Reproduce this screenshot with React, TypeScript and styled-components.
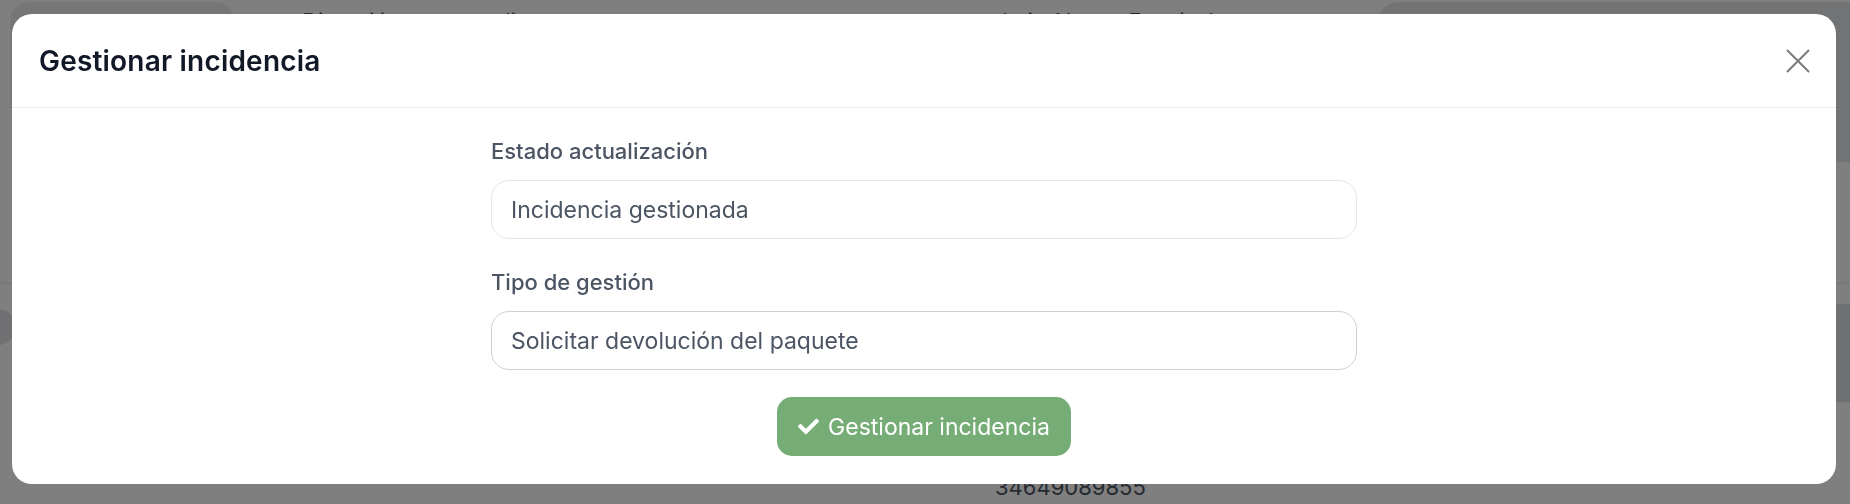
import React from "react";
import styled, { createGlobalStyle } from "styled-components";
import { FaCheck } from "react-icons/fa";

const GlobalStyle = createGlobalStyle`
  html, body {
    margin: 0;
    padding: 0;
    background: #ffffff;
    overflow: hidden;
  }
  body {
    font-family: Inter, "Open Sans", "Liberation Sans", sans-serif;
  }
`;

const App = () => {
  return (
    <>
      <GlobalStyle />
      <Page>
        <TopSection>
          <SideCard />
          <AddressText>Dirección entrega cliente</AddressText>
          <NameText>Luis Alonso Fernández</NameText>
          <RightPanel />
        </TopSection>
        <MiddleRow>
          <Avatar />
          <RowBox>
            <RowText>p</RowText>
          </RowBox>
        </MiddleRow>
        <Phone>34649089855</Phone>
      </Page>

      <Overlay>
        <Modal>
          <Header>
            <Title>Gestionar incidencia</Title>
            <CloseButton aria-label="Cerrar">
              <svg width="24" height="24" viewBox="0 0 24 24">
                <path
                  d="M1.5 1.5 L22.5 22.5 M22.5 1.5 L1.5 22.5"
                  stroke="#7b7b7b"
                  strokeWidth="2"
                  strokeLinecap="round"
                  fill="none"
                />
              </svg>
            </CloseButton>
          </Header>
          <Body>
            <Form>
              <Field>
                <Label>Estado actualización</Label>
                <Input readOnly value="Incidencia gestionada" />
              </Field>
              <Field>
                <Label>Tipo de gestión</Label>
                <Input readOnly $strong value="Solicitar devolución del paquete" />
              </Field>
            </Form>
            <SubmitButton>
              <FaCheck size={21} />
              Gestionar incidencia
            </SubmitButton>
          </Body>
        </Modal>
      </Overlay>
    </>
  );
};

export default App;

// page behind the modal

const Page = styled.div`
  width: 1850px;
  height: 504px;
  color: #4b5563;
  font-family: Inter, "Open Sans", sans-serif;
`;

const TopSection = styled.div`
  display: flex;
  align-items: flex-start;
  height: 280px;
  padding-top: 2px;
  border-bottom: 2px solid #f0f0f0;
`;

const SideCard = styled.div`
  flex: none;
  width: 225px;
  height: 120px;
  margin-left: 10px;
  border-radius: 20px;
  background: #ececec;
`;

const AddressText = styled.div`
  flex: none;
  width: 700px;
  margin-left: 67px;
  margin-top: 6px;
  font-size: 22px;
  line-height: 26px;
`;

const NameText = styled.div`
  flex: none;
  width: 300px;
  margin-top: 6px;
  font-size: 22px;
  line-height: 26px;
`;

const RightPanel = styled.div`
  flex: 1;
  height: 160px;
  margin-left: 76px;
  border-radius: 20px 0 0 20px;
  background: #e5e6ea;
`;

const MiddleRow = styled.div`
  display: flex;
  align-items: flex-start;
  justify-content: space-between;
  padding-top: 20px;
  height: 180px;
`;

const Avatar = styled.div`
  width: 36px;
  height: 36px;
  margin-top: 5px;
  margin-left: -20px;
  border-radius: 50%;
  background: #e2e3e6;
`;

const RowBox = styled.div`
  width: 160px;
  height: 98px;
  background: #dfe0e3;
  display: flex;
  align-items: center;
  padding-left: 8px;
  box-sizing: border-box;
`;

const RowText = styled.span`
  font-size: 22px;
  color: #374151;
`;

const Phone = styled.div`
  position: absolute;
  top: 474px;
  left: 995px;
  font-size: 22px;
  color: #4b5563;
`;

// modal

const Overlay = styled.div`
  position: fixed;
  inset: 0;
  background: rgba(0, 0, 0, 0.5);
  padding: 14px 14px 0 12px;
  box-sizing: border-box;
`;

const Modal = styled.div`
  background: #ffffff;
  border-radius: 20px;
  overflow: hidden;
`;

const Header = styled.div`
  height: 93px;
  display: flex;
  align-items: center;
  justify-content: space-between;
  padding: 0 26px 0 27px;
  border-bottom: 1px solid #ececec;
`;

const Title = styled.h2`
  margin: 0;
  font-size: 28px;
  font-weight: 600;
  letter-spacing: 0.2px;
  color: #111827;
`;

const CloseButton = styled.button`
  border: none;
  background: none;
  padding: 0;
  display: flex;
  cursor: pointer;
`;

const Body = styled.div`
  display: flex;
  flex-direction: column;
  align-items: center;
  padding: 28px 0 28px;
`;

const Form = styled.div`
  width: 866px;
  display: flex;
  flex-direction: column;
  gap: 28px;
`;

const Field = styled.div`
  display: flex;
  flex-direction: column;
  gap: 14px;
`;

const Label = styled.label`
  font-size: 22px;
  line-height: 30px;
  font-weight: 500;
  color: #4b5563;
`;

const Input = styled.input<{ $strong?: boolean }>`
  height: 59px;
  box-sizing: border-box;
  border: 1px solid ${(p) => (p.$strong ? "#cfd1d4" : "#e4e5e7")};
  border-radius: 18px;
  padding: 0 19px;
  font-family: inherit;
  font-size: 23px;
  color: #4b5563;
  outline: none;
  background: #ffffff;
`;

const SubmitButton = styled.button`
  margin-top: 27px;
  width: 294px;
  height: 59px;
  display: flex;
  align-items: center;
  justify-content: center;
  gap: 9px;
  border: none;
  border-radius: 15px;
  background: #76ad76;
  color: #ffffff;
  font-family: inherit;
  font-size: 23px;
  font-weight: 400;
  cursor: pointer;
`;
